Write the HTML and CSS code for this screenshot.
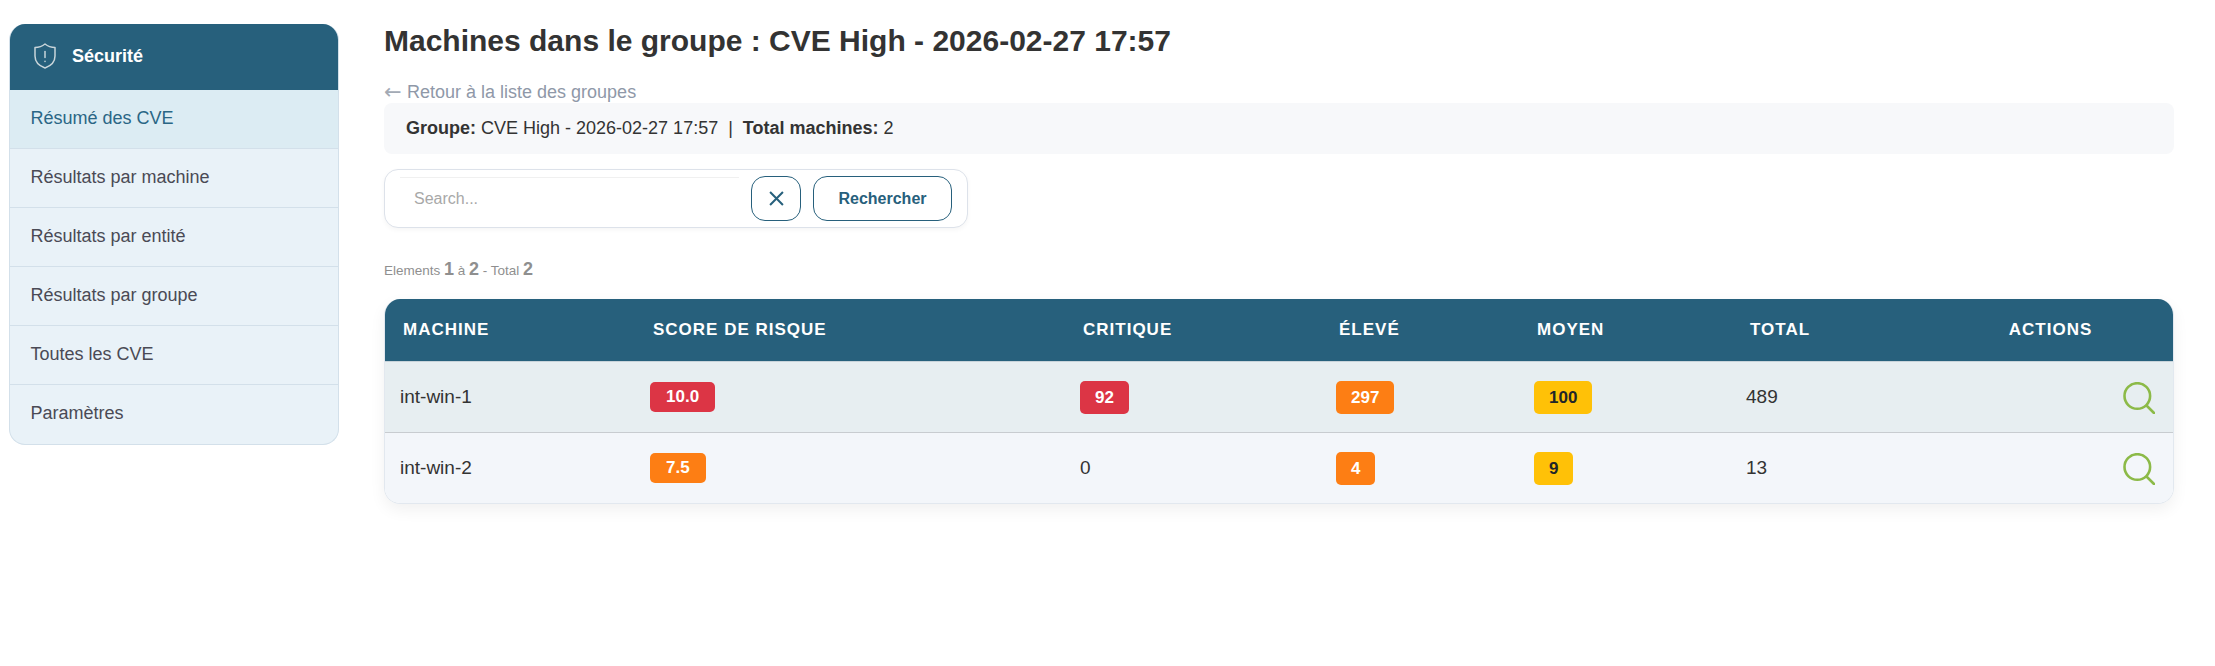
FILE: index.html
```html
<!DOCTYPE html>
<html lang="fr">
<head>
<meta charset="utf-8">
<title>Machines dans le groupe</title>
<link rel="stylesheet" href="styles.css">
</head>
<body>
<div class="layout">
  <aside class="sidebar">
    <div class="side-head">
      <svg class="shield" viewBox="0 0 22 26" fill="none" stroke="currentColor" stroke-width="1.5" stroke-linejoin="round" stroke-linecap="round"><path d="M11 1C14 3.5 17.5 4.5 21 4.5V13C21 19 16.5 23 11 25C5.5 23 1 19 1 13V4.5C4.5 4.5 8 3.5 11 1Z"/><path d="M11 8.5V14.5"/><path d="M11 18.2V18.4"/></svg>
      <span>Sécurité</span>
    </div>
    <nav class="side-nav">
      <a class="side-link active">Résumé des CVE</a>
      <a class="side-link">Résultats par machine</a>
      <a class="side-link">Résultats par entité</a>
      <a class="side-link">Résultats par groupe</a>
      <a class="side-link">Toutes les CVE</a>
      <a class="side-link">Paramètres</a>
    </nav>
  </aside>
  <main class="main">
    <h1 class="title">Machines dans le groupe : CVE High - 2026-02-27 17:57</h1>
    <a class="back"><span class="arrow">←</span>Retour à la liste des groupes</a>
    <div class="info"><b>Groupe:</b> CVE High - 2026-02-27 17:57 &nbsp;|&nbsp; <b>Total machines:</b> 2</div>
    <form class="search">
      <input class="search-input" type="text" placeholder="Search...">
      <button class="btn btn-clear" type="button" aria-label="Effacer">
        <svg viewBox="0 0 14 14" fill="none" stroke="currentColor" stroke-width="1.9"><path d="M1 1L13 13M13 1L1 13"/></svg>
      </button>
      <button class="btn btn-search" type="button">Rechercher</button>
    </form>
    <p class="count">Elements <b>1</b> à <b>2</b> - Total <b>2</b></p>
    <div class="table-card">
      <table class="grid">
        <colgroup>
          <col class="c1"><col class="c2"><col class="c3"><col class="c4"><col class="c5"><col class="c6"><col class="c7">
        </colgroup>
        <thead>
          <tr><th>Machine</th><th>Score de risque</th><th>Critique</th><th>Élevé</th><th>Moyen</th><th class="th-total">Total</th><th class="th-actions">Actions</th></tr>
        </thead>
        <tbody>
          <tr class="row-a">
            <td>int-win-1</td>
            <td><span class="score red">10.0</span></td>
            <td><span class="pill red">92</span></td>
            <td><span class="pill orange">297</span></td>
            <td><span class="pill yellow">100</span></td>
            <td>489</td>
            <td class="td-actions"><svg class="loupe" viewBox="0 0 32 32" fill="none" stroke="currentColor" stroke-width="2.6" stroke-linecap="round"><circle cx="14.3" cy="14" r="12.8"/><path d="M24 24L31 31"/></svg></td>
          </tr>
          <tr class="row-b">
            <td>int-win-2</td>
            <td><span class="score orange">7.5</span></td>
            <td>0</td>
            <td><span class="pill orange">4</span></td>
            <td><span class="pill yellow">9</span></td>
            <td>13</td>
            <td class="td-actions"><svg class="loupe" viewBox="0 0 32 32" fill="none" stroke="currentColor" stroke-width="2.6" stroke-linecap="round"><circle cx="14.3" cy="14" r="12.8"/><path d="M24 24L31 31"/></svg></td>
          </tr>
        </tbody>
      </table>
    </div>
  </main>
</div>
</body>
</html>
```
FILE: styles.css
```css
* { box-sizing: border-box; }
html, body { margin: 0; background: #fff; }
body { font-family: "Liberation Sans", Arial, sans-serif; color: #333; }
.layout { display: flex; align-items: flex-start; gap: 45px; padding: 24px 41px 0 9px; min-height: 666px; }

.sidebar { flex: 0 0 330px; border-radius: 16px; overflow: hidden; background: #e9f2f8; border: 1px solid #d3e0ea; border-top: 0; }
.side-head { display: flex; align-items: center; height: 66px; margin: 0 -1px; padding: 0 0 2px 25px; gap: 16px; background: #27607c; color: #fff; font-size: 18px; font-weight: 700; }
.shield { width: 22px; height: 26px; color: #c9d5da; }
.side-nav { display: flex; flex-direction: column; }
.side-link { display: flex; align-items: center; height: 59px; padding: 0 0 2px 20.5px; font-size: 18px; color: #4a4a55; border-bottom: 1px solid #d3e0ea; }
.side-link:last-child { border-bottom: 0; }
.side-link.active { background: #dcecf3; color: #2a6685; }

.main { flex: 1; min-width: 0; }
.title { margin: 0; padding-bottom: 2px; font-size: 30px; line-height: 34px; font-weight: 700; color: #333; }
.back { display: block; margin-top: 20px; height: 23px; line-height: 24px; font-size: 18px; color: #8f98a8; }
.arrow { display: inline-block; width: 23px; line-height: 1; font-size: 21px; font-family: "DejaVu Sans", sans-serif; font-weight: 400; color: #a3aab5; vertical-align: -1px; }
.info { display: flex; align-items: center; white-space: pre-wrap; height: 51px; padding-left: 22px; background: #f7f8fa; border-radius: 8px; font-size: 18px; color: #333; }
.search { display: flex; align-items: center; width: 584px; height: 59px; margin-top: 15px; padding: 0 15px; border: 1px solid #dde2ea; border-radius: 14px; background: #fff; box-shadow: 0 2px 5px rgba(0,0,0,.04); }
.search-input { width: 339px; height: 44px; padding: 0 14px; border: 0; border-top: 1px solid #f0f0f0; font: 16px "Liberation Sans", Arial, sans-serif; color: #333; outline: 0; background: #fff; }
.search-input::placeholder { color: #a8a8a8; opacity: 1; }
.btn { height: 45px; border: 1px solid #27607c; border-radius: 14px; background: #fff; color: #27607c; font: 700 16px "Liberation Sans", Arial, sans-serif; padding: 0; display: flex; align-items: center; justify-content: center; }
.btn-clear { width: 50px; margin-left: 12px; }
.btn-clear svg { width: 15px; height: 15px; }
.btn-search { width: 139px; margin-left: 12px; }
.count { margin: 30px 0 0; height: 22px; line-height: 22px; font-size: 13.5px; color: #8f8f8f; }
.count b { font-size: 18px; }

.table-card { margin-top: 19px; border: 1px solid #e2e8ef; border-top: 0; border-radius: 16px; overflow: hidden; box-shadow: 0 6px 16px rgba(0,0,0,.06); }
.grid { width: 100%; table-layout: fixed; border-collapse: separate; border-spacing: 0; }
.c1 { width: 249px; } .c2 { width: 430px; } .c3 { width: 256px; } .c4 { width: 198px; } .c5 { width: 212px; } .c6 { width: 198px; }
.grid th { height: 63px; padding: 0 0 0 19px; background: #27607c; color: #fff; font-size: 17px; font-weight: 700; letter-spacing: 1px; text-transform: uppercase; text-align: left; border-bottom: 1px solid #c8d3da; }
.grid th:first-child { padding-left: 18px; }
.grid th.th-total { padding-left: 20px; }
.grid th.th-actions { text-align: center; padding: 0; }
.grid td { padding: 0 0 0 16px; font-size: 19px; color: #333; }
.grid td:first-child { padding-left: 15px; }
.row-a td { height: 71px; background: #e7eef1; border-bottom: 1px solid #c8ccd0; }
.row-b td { height: 70px; background: #f3f6fa; }
.grid td.td-actions { padding: 2px 18px 0 0; text-align: right; }
.loupe { display: inline-block; width: 32px; height: 32px; color: #8cba48; vertical-align: middle; }
.score, .pill { display: inline-block; font-weight: 700; font-size: 17px; border-radius: 5px; vertical-align: middle; }
.score { height: 30px; line-height: 30px; padding: 0 16px; }
.pill { height: 33px; line-height: 33px; padding: 0 15px; }
.red { background: #dc3545; color: #fff; }
.orange { background: #fd7e14; color: #fff; }
.yellow { background: #ffc107; color: #212529; }
```
